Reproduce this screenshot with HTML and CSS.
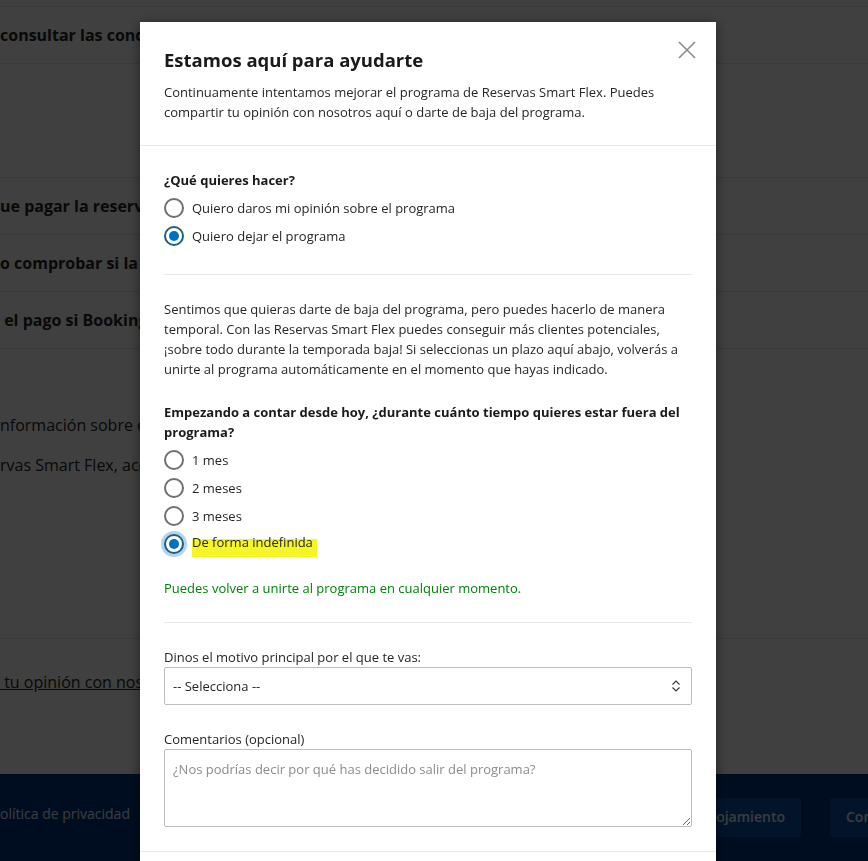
FILE: index.html
```html
<!DOCTYPE html>
<html lang="es">
<head>
    <meta charset="UTF-8">
    <meta name="viewport" content="width=device-width, initial-scale=1.0">
    <title>Reservas Smart Flex</title>
    <link rel="stylesheet" href="styles.css">
</head>
<body>
    <div class="page">
        <div class="faq">
            <div class="faq-item">consultar las condiciones de las Reservas Smart Flex?</div>
            <div class="faq-panel"></div>
            <div class="faq-item">ue pagar la reserva si el cliente cancela?</div>
            <div class="faq-item">o comprobar si la tarjeta es válida?</div>
            <div class="faq-item"> el pago si Booking.com cobra al cliente?</div>
        </div>

        <div class="info">
            <p>nformación sobre el programa</p>
            <p>rvas Smart Flex, aceptas las condiciones</p>
        </div>

        <div class="feedback">
            <a href="#"> tu opinión con nosotros</a>
        </div>
    </div>

    <footer class="site-footer">
        <span>olítica de privacidad</span>
        <div class="footer-actions">
            <button>Alojamiento</button>
            <button>Contactar</button>
        </div>
    </footer>

    <div class="overlay"></div>

    <div class="modal">
        <div class="modal-header">
            <h2>Estamos aquí para ayudarte</h2>
            <p>Continuamente intentamos mejorar el programa de Reservas Smart Flex. Puedes compartir tu opinión con nosotros aquí o darte de baja del programa.</p>
            <button class="close" aria-label="Cerrar">
                <svg width="18" height="18" viewBox="0 0 18 18">
                    <path d="M1 1 L17 17 M17 1 L1 17" stroke="#8a8a8a" stroke-width="1.6" fill="none"/>
                </svg>
            </button>
        </div>

        <div class="modal-body">
            <p class="question">¿Qué quieres hacer?</p>
            <label class="option"><input type="radio" name="action"> Quiero daros mi opinión sobre el programa</label>
            <label class="option"><input type="radio" name="action" checked> Quiero dejar el programa</label>

            <hr class="divider">

            <p class="text">Sentimos que quieras darte de baja del programa, pero puedes hacerlo de manera temporal. Con las Reservas Smart Flex puedes conseguir más clientes potenciales, ¡sobre todo durante la temporada baja! Si seleccionas un plazo aquí abajo, volverás a unirte al programa automáticamente en el momento que hayas indicado.</p>

            <p class="question">Empezando a contar desde hoy, ¿durante cuánto tiempo quieres estar fuera del programa?</p>
            <label class="option"><input type="radio" name="period"> 1 mes</label>
            <label class="option"><input type="radio" name="period"> 2 meses</label>
            <label class="option"><input type="radio" name="period"> 3 meses</label>
            <label class="option"><input type="radio" name="period" class="focused" checked> <span class="marker">De forma indefinida</span></label>

            <p class="success">Puedes volver a unirte al programa en cualquier momento.</p>

            <hr class="divider">

            <label class="field-label" for="reason">Dinos el motivo principal por el que te vas:</label>
            <div class="select-wrap">
                <select id="reason">
                    <option>-- Selecciona --</option>
                </select>
                <svg class="select-icon" width="10" height="12" viewBox="0 0 10 12">
                    <path d="M1.5 4.5 L5 1 L8.5 4.5 M1.5 7.5 L5 11 L8.5 7.5" stroke="#333" stroke-width="1.1" fill="none"/>
                </svg>
            </div>

            <label class="field-label" for="comments">Comentarios (opcional)</label>
            <textarea id="comments" placeholder="¿Nos podrías decir por qué has decidido salir del programa?"></textarea>
        </div>

        <div class="modal-footer"></div>
    </div>
</body>
</html>
```

FILE: styles.css
```css
body {
    margin: 0;
    font-family: "Open Sans", Arial, sans-serif;
    color: #262626;
    background: #fff;
    overflow: hidden;
    height: 861px;
}

/* background page */
.page {
    padding-top: 6px;
    white-space: nowrap;
}
.faq {
    border-top: 1px solid #e6e6e6;
}
.faq-item {
    font-weight: 700;
    font-size: 16px;
    line-height: 24px;
    padding: 16px 0;
    border-bottom: 1px solid #e6e6e6;
    white-space: pre;
}
.faq-panel {
    height: 113px;
    border-bottom: 1px solid #e6e6e6;
}
.info {
    padding: 64px 0 0;
    height: 225px;
    border-bottom: 1px solid #e6e6e6;
}
.info p {
    margin: 0 0 16px;
    font-size: 16px;
    line-height: 24px;
}
.feedback {
    padding-top: 31px;
    height: 104px;
    font-size: 16px;
    line-height: 24px;
}
.feedback a {
    color: #262626;
    white-space: pre;
}

.site-footer {
    width: 1000px;
    height: 120px;
    background: #003580;
    color: #e8eef8;
    display: flex;
    align-items: flex-start;
    padding-top: 24px;
    font-size: 14px;
}
.site-footer span {
    line-height: 32px;
}
.footer-actions {
    margin-left: auto;
    display: flex;
    gap: 29px;
}
.footer-actions button {
    background: #0a4fa8;
    color: #e8eef8;
    border: none;
    border-radius: 2px;
    font-family: inherit;
    font-size: 14px;
    font-weight: 600;
    height: 39px;
    padding: 0 16px 2px;
}
.footer-actions button:last-child {
    width: 170px;
    text-align: left;
}

.overlay {
    position: fixed;
    inset: 0;
    background: rgba(0, 0, 0, 0.75);
}

/* modal */
.modal {
    position: fixed;
    top: 22px;
    left: 140px;
    width: 576px;
    background: #fff;
    box-shadow: 0 2px 12px rgba(0, 0, 0, 0.5);
    color: #262626;
    font-size: 13px;
}
.modal-header {
    position: relative;
    padding: 24px 24px 23px;
    border-bottom: 1px solid #e7e7e7;
}
.modal-header h2 {
    margin: 0 0 8px;
    font-size: 18.5px;
    line-height: 28px;
    font-weight: 700;
    color: #1a1a1a;
}
.modal-header p {
    margin: 0;
    line-height: 20px;
}
.close {
    position: absolute;
    top: 19px;
    right: 20px;
    background: none;
    border: none;
    padding: 0;
    width: 18px;
    height: 18px;
}

.modal-body {
    padding: 24px 24px 24px;
    border-bottom: 1px solid #e7e7e7;
}
.question {
    margin: 0 0 4px;
    font-weight: 700;
    line-height: 20px;
    color: #1a1a1a;
}
.option {
    display: flex;
    align-items: center;
    gap: 8px;
    height: 28px;
    line-height: 20px;
}
.option input {
    appearance: none;
    margin: 0;
    width: 20px;
    height: 20px;
    border: 2px solid #707070;
    border-radius: 50%;
    background: #fff;
    display: grid;
    place-items: center;
}
.option input:checked {
    border-color: #1d5f8c;
}
.option input:checked::after {
    content: "";
    width: 10px;
    height: 10px;
    border-radius: 50%;
    background: #0071c2;
}
.option input.focused {
    box-shadow: 0 0 0 3px rgba(0, 113, 194, 0.3);
}
.marker {
    display: inline-block;
    padding: 0 4px 5px 0;
    margin-right: -4px;
    background: linear-gradient(transparent 7px, #f6f626 7px);
}
.divider {
    border: none;
    border-top: 1px solid #e7e7e7;
    margin: 24px 0;
}
.text {
    margin: 0 0 23px;
    line-height: 20px;
}
.success {
    margin: 20px 0 0;
    line-height: 20px;
    color: #008009;
}
.field-label {
    display: block;
    line-height: 20px;
}
.select-wrap {
    position: relative;
    margin-bottom: 24px;
}
.select-wrap select {
    appearance: none;
    width: 100%;
    height: 38px;
    border: 1px solid #bdbdbd;
    border-radius: 2px;
    background: #fff;
    padding: 0 8px;
    font-family: inherit;
    font-size: 13px;
    color: #262626;
}
.select-icon {
    position: absolute;
    right: 11px;
    top: 13px;
}
textarea {
    display: block;
    box-sizing: border-box;
    width: 100%;
    height: 78px;
    border: 1px solid #bdbdbd;
    border-radius: 2px;
    padding: 9px 8px;
    font-family: inherit;
    font-size: 13px;
    line-height: 20px;
}
textarea::placeholder {
    color: #8c8c8c;
}
.modal-footer {
    height: 40px;
}
```
